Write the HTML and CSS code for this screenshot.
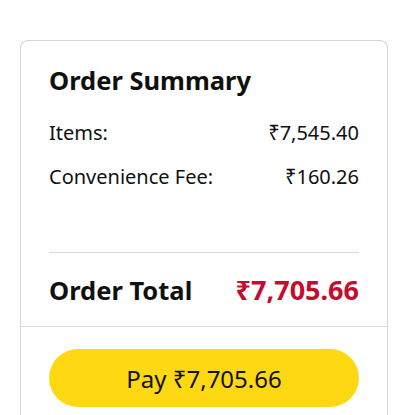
FILE: index.html
```html
<!DOCTYPE html>
<html>
<head>
<meta charset="utf-8">
<link rel="stylesheet" href="styles.css">
</head>
<body>
<div class="card">
  <div class="summary">
    <h2 class="title">Order Summary</h2>
    <div class="row first"><span>Items:</span><span>₹7,545.40</span></div>
    <div class="row"><span>Convenience Fee:</span><span>₹160.26</span></div>
    <hr class="divider">
    <div class="total"><span>Order Total</span><span class="price">₹7,705.66</span></div>
  </div>
  <div class="action">
    <button class="pay">Pay ₹7,705.66</button>
  </div>
</div>
</body>
</html>
```
FILE: styles.css
```css
html, body {
  margin: 0;
  padding: 0;
  background: #ffffff;
  height: 415px;
  overflow: hidden;
}
body {
  font-family: "Noto Sans", "DejaVu Sans", sans-serif;
  color: #0f1111;
  padding: 40px 0 0 20px;
  box-sizing: border-box;
}
.card {
  width: 368px;
  box-sizing: border-box;
  border: 1px solid #d5d9d9;
  border-bottom: none;
  border-radius: 8px 8px 0 0;
  height: 375px;
  overflow: hidden;
}
.summary {
  padding: 22px 28px 18px;
  border-bottom: 1px solid #d5d9d9;
}
.title {
  margin: 0;
  font-size: 25.5px;
  line-height: 34px;
  font-weight: 700;
}
.row {
  display: flex;
  justify-content: space-between;
  font-size: 20px;
  line-height: 26px;
  margin-top: 18px;
}
.row.first {
  margin-top: 23px;
}
.divider {
  border: none;
  border-top: 1px solid #d5d9d9;
  margin: 62px 0 0;
}
.total {
  display: flex;
  justify-content: space-between;
  align-items: baseline;
  margin-top: 19px;
  font-size: 25.5px;
  line-height: 36px;
  font-weight: 700;
}
.price {
  font-size: 27px;
  color: #c40c2c;
}
.action {
  padding: 22px 28px;
}
.pay {
  display: block;
  width: 100%;
  height: 58px;
  border: none;
  border-radius: 29px;
  background: #ffd814;
  color: #0f1111;
  font-family: "Noto Sans", "DejaVu Sans", sans-serif;
  font-size: 24px;
}
```
